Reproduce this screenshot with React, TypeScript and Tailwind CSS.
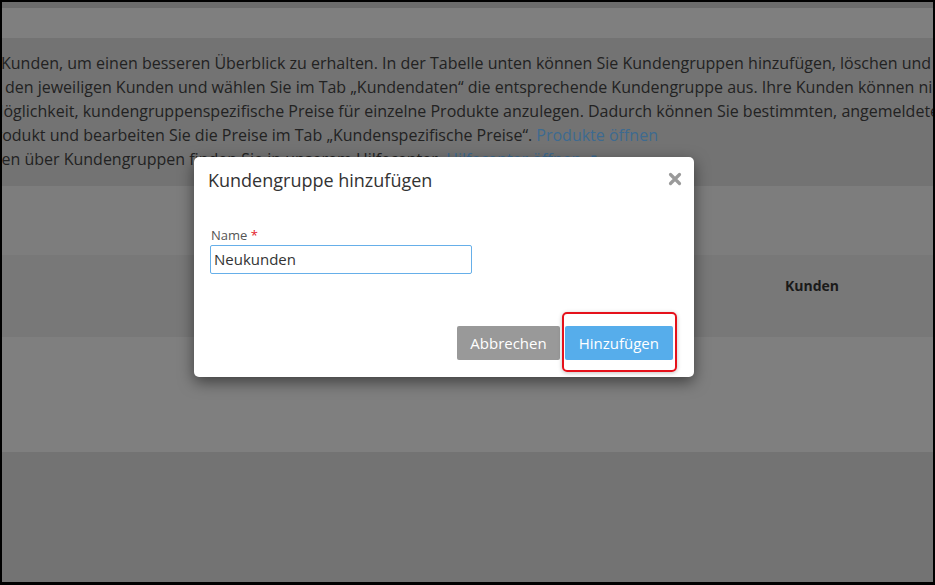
import React from 'react';

const lines: { text: React.ReactNode; offset: string }[] = [
  {
    text: 'Kunden, um einen besseren Überblick zu erhalten. In der Tabelle unten können Sie Kundengruppen hinzufügen, löschen und verwalten.',
    offset: '-ml-[1px]',
  },
  {
    text: 'Sie den jeweiligen Kunden und wählen Sie im Tab „Kundendaten“ die entsprechende Kundengruppe aus. Ihre Kunden können nicht sehen, welcher Gruppe sie angehören.',
    offset: '-ml-[23px]',
  },
  {
    text: 'Möglichkeit, kundengruppenspezifische Preise für einzelne Produkte anzulegen. Dadurch können Sie bestimmten, angemeldeten Kunden andere Preise anzeigen.',
    offset: '-ml-[13px]',
  },
  {
    text: (
      <>
        Produkt und bearbeiten Sie die Preise im Tab „Kundenspezifische Preise“.{' '}
        <span className="text-[#3d6a90]">Produkte öffnen</span>
      </>
    ),
    offset: '-ml-[16px]',
  },
  {
    text: (
      <>
        onen über Kundengruppen finden Sie in unserem Hilfecenter.{' '}
        <span className="text-[#3d6a90]">Hilfecenter öffnen ↗</span>
      </>
    ),
    offset: '-ml-[20px]',
  },
];

export default function App() {
  return (
    <div
      className="relative w-[935px] h-[585px] bg-black pt-[2px] pl-[2px] pr-[2px] pb-[3px] overflow-hidden"
      style={{ fontFamily: '"Open Sans", "Noto Sans", sans-serif' }}
    >
      <div className="flex flex-col h-full bg-[#737373] overflow-hidden">
        <div className="h-[6px] bg-[#6c6c6c]" />
        <div className="h-[30px] bg-[#7f7f7f]" />

        {/* intro text */}
        <div className="h-[148px] pt-[13px] text-[16px] leading-[24px] text-[#222222] overflow-hidden">
          {lines.map((l, i) => (
            <div key={i} className={`whitespace-nowrap ${l.offset}`}>
              {l.text}
            </div>
          ))}
        </div>

        <div className="h-[69px] bg-[#7d7d7d]" />

        {/* table header */}
        <div className="h-[82px] bg-[#787878] grid grid-cols-[783px_1fr] items-start pt-[21px]">
          <div />
          <div className="text-[14px] leading-[20px] font-bold text-[#1a1a1a]">Kunden</div>
        </div>

        <div className="h-[115px] bg-[#7f7f7f]" />
        <div className="flex-1 bg-[#737373]" />
      </div>

      {/* modal */}
      <div className="absolute left-[194px] top-[157px] w-[500px] h-[220px] bg-white rounded-[5px] shadow-[0_5px_15px_rgba(0,0,0,0.5)]">
        <div className="flex items-start justify-between pl-[14px] pr-[12px] pt-[11px]">
          <h4 className="text-[18px] leading-[24px] text-[#333333]">Kundengruppe hinzufügen</h4>
          <svg width="14" height="14" viewBox="0 0 14 14" className="mt-[4px]">
            <path d="M2.5 2.5 L11.5 11.5 M11.5 2.5 L2.5 11.5" stroke="#9a9a9a" strokeWidth="3.2" strokeLinecap="round" />
          </svg>
        </div>

        <div className="pl-[16px] mt-[34px]">
          <label className="block text-[13px] leading-[18px] text-[#555555] pl-[1px] mb-[1px]">
            Name <span className="text-[#e4202a]">*</span>
          </label>
          <div className="w-[262px] h-[29px] border border-[#66afe9] rounded-[2px] px-[3px] flex items-center text-[15px] text-[#333333]">
            Neukunden
          </div>
        </div>

        <div className="flex justify-end gap-[5px] pr-[21px] mt-[52px]">
          <button className="h-[34px] px-[13px] bg-[#999999] text-white text-[15px] rounded-[2px]">Abbrechen</button>
          <div className="relative">
            <button className="h-[34px] px-[14px] bg-[#56adeb] text-white text-[15px] rounded-[2px]">Hinzufügen</button>
            <div className="absolute -left-[3px] -right-[4px] -top-[14px] -bottom-[12px] border-2 border-[#e5111b] rounded-[5px] shadow-[0_1px_4px_rgba(0,0,0,0.25)] pointer-events-none" />
          </div>
        </div>
      </div>
    </div>
  );
}
